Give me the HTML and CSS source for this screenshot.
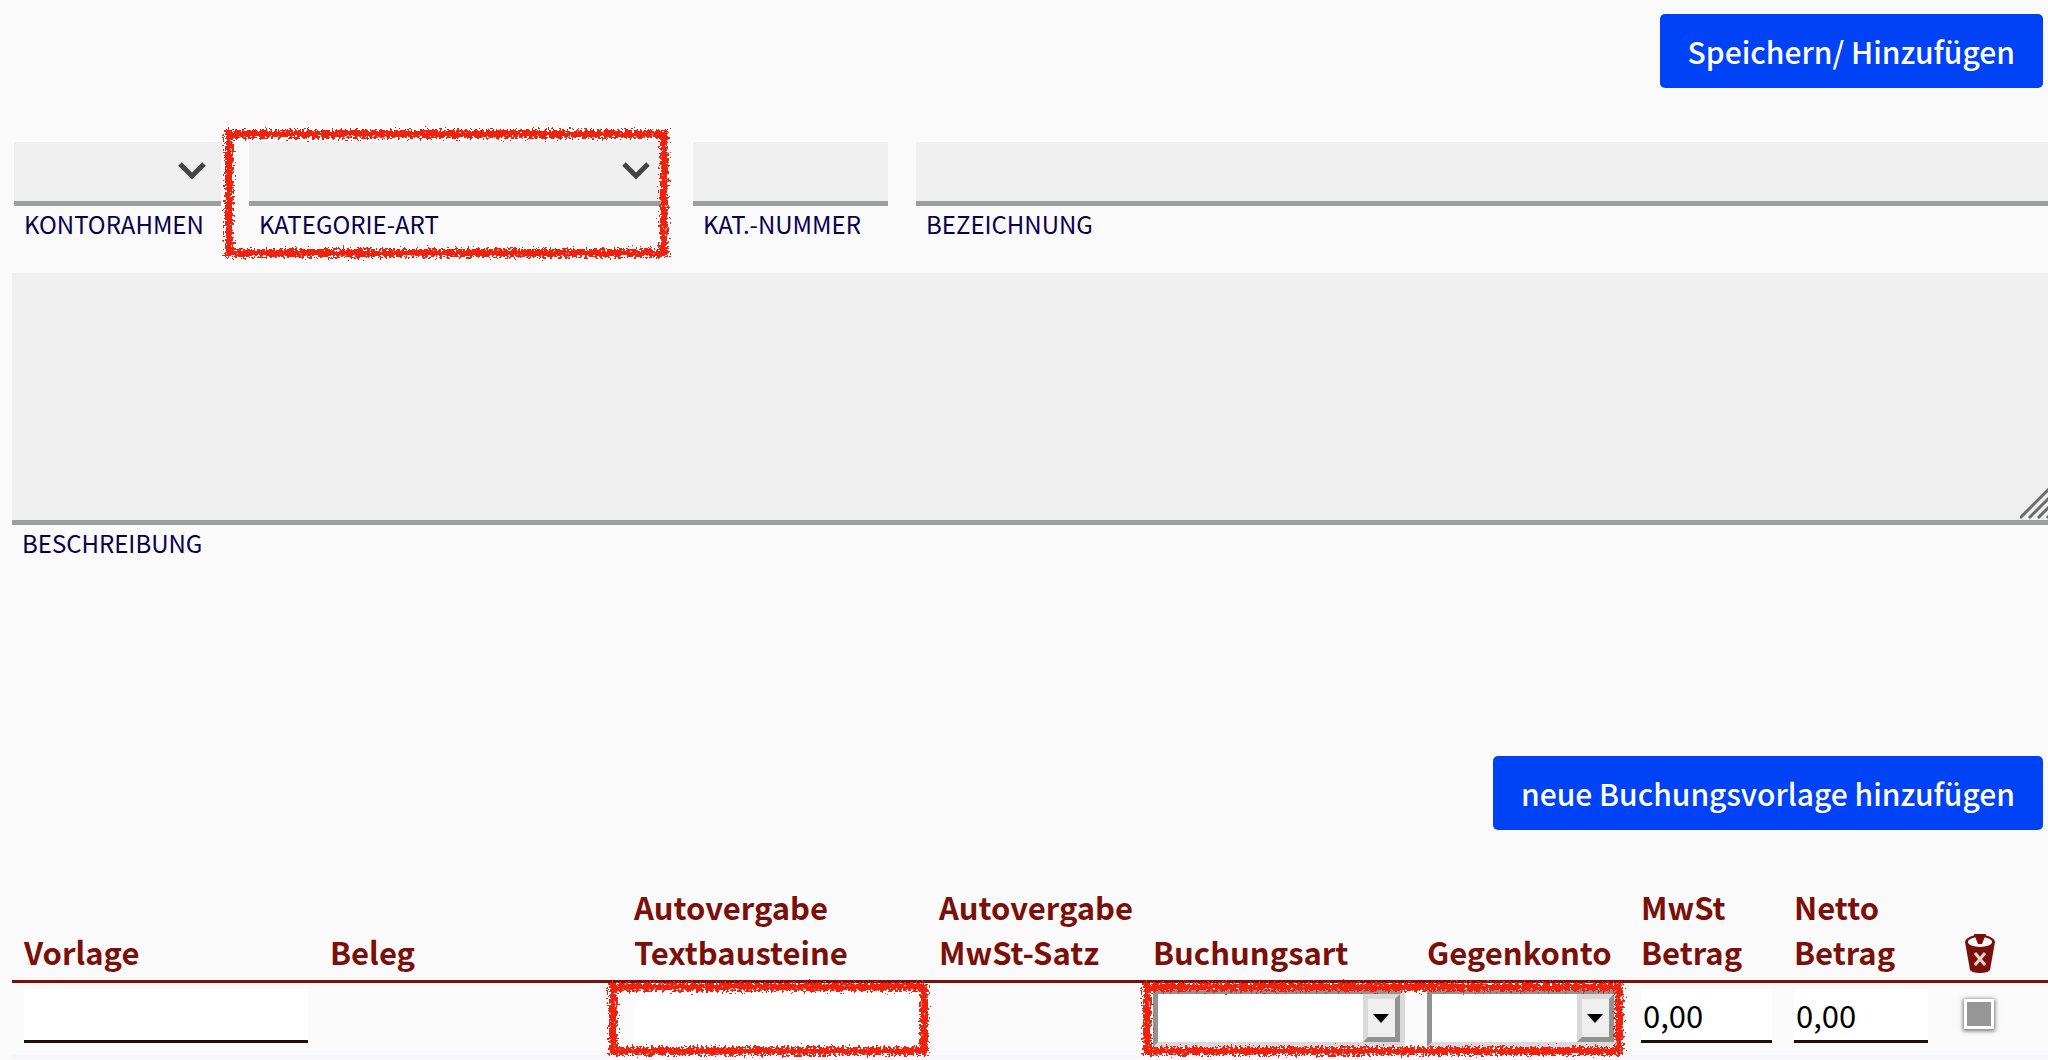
FILE: index.html
```html
<!DOCTYPE html>
<html lang="de">
<head>
  <meta charset="utf-8">
  <title>Kategorie bearbeiten</title>
  <link rel="stylesheet" href="styles.css">
</head>
<body>
  <!-- crayon edge for the markers -->
  <svg class="defs" width="0" height="0" aria-hidden="true">
    <filter id="crayon" x="-5%" y="-10%" width="110%" height="120%">
      <feTurbulence type="fractalNoise" baseFrequency="0.4" numOctaves="3" seed="4" result="noise"/>
      <feDisplacementMap in="SourceGraphic" in2="noise" scale="12" xChannelSelector="R" yChannelSelector="G"/>
    </filter>
  </svg>

  <form>
    <div class="toolbar">
      <button type="button" class="btn">Speichern/ Hinzufügen</button>
    </div>

    <div class="fields">
      <div class="field">
        <select id="kontorahmen"><option></option></select>
        <svg class="chevron" viewBox="0 0 28 18" aria-hidden="true"><path d="M2 2L14 14L26 2"/></svg>
        <label for="kontorahmen">KONTORAHMEN</label>
      </div>
      <div class="field">
        <select id="kategorie"><option></option></select>
        <svg class="chevron" viewBox="0 0 28 18" aria-hidden="true"><path d="M2 2L14 14L26 2"/></svg>
        <label for="kategorie">KATEGORIE-ART</label>
        <span class="marker marker-field"></span>
      </div>
      <div class="field">
        <input type="text" id="nummer">
        <label for="nummer">KAT.-NUMMER</label>
      </div>
      <div class="field">
        <input type="text" id="bezeichnung">
        <label for="bezeichnung">BEZEICHNUNG</label>
      </div>
    </div>

    <div class="description">
      <textarea id="beschreibung"></textarea>
      <svg class="grip" viewBox="0 0 28 32" aria-hidden="true"><path d="M0 30L30 0M9 30L39 0M18 30L48 0M27 30L57 0"/></svg>
      <label for="beschreibung">BESCHREIBUNG</label>
    </div>

    <div class="toolbar second">
      <button type="button" class="btn">neue Buchungsvorlage hinzufügen</button>
    </div>

    <table>
      <colgroup>
        <col class="c-vorlage"><col class="c-beleg"><col class="c-text"><col class="c-satz">
        <col class="c-art"><col class="c-konto"><col class="c-mwst"><col class="c-netto"><col>
      </colgroup>
      <thead>
        <tr>
          <th>Vorlage</th>
          <th>Beleg</th>
          <th>Autovergabe<br>Textbausteine</th>
          <th>Autovergabe<br>MwSt-Satz</th>
          <th>Buchungsart</th>
          <th>Gegenkonto</th>
          <th>MwSt<br>Betrag</th>
          <th>Netto<br>Betrag</th>
          <th class="del">
            <svg class="trash" viewBox="0 0 32 40" role="img" aria-label="Löschen">
              <path class="bin" d="M1 8Q1 4 11 1H21Q31 4 31 8L26 36Q24 39 16 39T6 36Z"/>
              <ellipse class="rim" cx="16" cy="8" rx="12" ry="5"/>
              <path class="bin" d="M10 0H22L18 10H14Z"/>
              <path class="cross" d="M11 19L21 31M21 19L11 31"/>
            </svg>
          </th>
        </tr>
      </thead>
      <tbody>
        <tr>
          <td><input type="text" class="cell" aria-label="Vorlage"></td>
          <td></td>
          <td class="marked">
            <input type="text" class="cell plain" aria-label="Textbausteine">
            <span class="marker marker-text"></span>
          </td>
          <td></td>
          <td class="marked">
            <span class="drop">
              <select aria-label="Buchungsart"><option></option></select>
              <span class="arrow"></span>
            </span>
            <span class="marker marker-drops"></span>
          </td>
          <td>
            <span class="drop">
              <select aria-label="Gegenkonto"><option></option></select>
              <span class="arrow"></span>
            </span>
          </td>
          <td><input type="text" class="cell" value="0,00" aria-label="MwSt Betrag"></td>
          <td><input type="text" class="cell" value="0,00" aria-label="Netto Betrag"></td>
          <td class="del"><input type="checkbox" aria-label="Löschen"></td>
        </tr>
      </tbody>
    </table>
  </form>
</body>
</html>
```
FILE: styles.css
```css
* {
  box-sizing: border-box;
}

body {
  margin: 0;
  background: #fafafa;
  overflow-x: hidden;
  font-family: "Noto Sans CJK JP", "Open Sans", sans-serif;
}

input, select, textarea, button {
  font-family: inherit;
  border-radius: 0;
  outline: none;
}

.defs {
  position: absolute;
}

.toolbar {
  display: flex;
  justify-content: flex-end;
  padding: 14px 5px 0 0;
}

.btn {
  height: 74px;
  padding: 0 28px;
  border: 0;
  border-radius: 5px;
  background: #0042f5;
  color: #fff;
  font-size: 30px;
  font-weight: 500;
  line-height: 44px;
}

.fields {
  display: grid;
  grid-template-columns: 207px 416px 195px 1fr;
  gap: 28px;
  padding: 54px 0 0 14px;
}

.field {
  position: relative;
}

.field select,
.field input {
  display: block;
  width: 100%;
  height: 64px;
  border: 0;
  border-bottom: 5px solid #9b9e9c;
  background: #efefef;
  appearance: none;
}

label {
  display: block;
  padding-left: 10px;
  color: #07004f;
  font-size: 24px;
  line-height: 36px;
}

.chevron {
  position: absolute;
  top: 20px;
  right: 15px;
  width: 28px;
  height: 18px;
  fill: none;
  stroke: #444;
  stroke-width: 5;
}

.marker {
  position: absolute;
  z-index: 1;
  border: 8px solid #f0220c;
  filter: url(#crayon);
  pointer-events: none;
}

.marker-field {
  top: -12px;
  left: -24px;
  right: -3px;
  height: 127px;
}

.description {
  position: relative;
  padding: 31px 0 0 12px;
}

textarea {
  display: block;
  width: 100%;
  height: 252px;
  border: 0;
  border-bottom: 5px solid #9b9e9c;
  background: #efefef;
  resize: none;
}

.grip {
  position: absolute;
  top: 246px;
  right: 0;
  width: 28px;
  height: 32px;
  fill: none;
  stroke: #6a6a6a;
  stroke-width: 3;
}

.second {
  padding-top: 195px;
}

table {
  width: calc(100% - 12px);
  margin: 54px 0 0 12px;
  border-collapse: collapse;
  table-layout: fixed;
}

.c-vorlage { width: 306px; }
.c-beleg { width: 304px; }
.c-text { width: 305px; }
.c-satz { width: 214px; }
.c-art { width: 274px; }
.c-konto { width: 214px; }
.c-mwst { width: 153px; }
.c-netto { width: 156px; }

th {
  padding: 0 0 6px 12px;
  border-bottom: 3px solid #7a1009;
  color: #7a1009;
  font-size: 31px;
  font-weight: 700;
  line-height: 45px;
  text-align: left;
  vertical-align: bottom;
  white-space: nowrap;
}

td {
  height: 75px;
  padding: 6px 0 0 12px;
  border-bottom: 3px solid #f5f5ff;
  vertical-align: top;
}

th.del,
td.del {
  padding-left: 26px;
}

.marked {
  position: relative;
}

.trash {
  display: block;
  width: 32px;
  height: 40px;
}

.bin {
  fill: #7a1009;
}

.rim {
  fill: #fafafa;
}

.cross {
  fill: none;
  stroke: #e8d0ce;
  stroke-width: 3;
}

.cell {
  display: block;
  width: calc(100% - 10px);
  height: 54px;
  padding: 0 2px;
  border: 0;
  border-bottom: 3px solid #1a1010;
  background: #fff;
  color: #000;
  font-size: 31px;
}

.plain {
  border-bottom-color: #fff;
}

.drop {
  display: block;
  position: relative;
  width: calc(100% - 10px);
}

.drop select {
  display: block;
  width: 100%;
  height: 58px;
  border: 5px solid;
  border-color: #929292 #d9d9d9 #d9d9d9 #929292;
  background: #fff;
  appearance: none;
}

.arrow {
  position: absolute;
  top: 5px;
  right: 5px;
  width: 37px;
  height: 48px;
  border: 5px solid;
  border-color: #d9d9d9 #929292 #929292 #d9d9d9;
  background: #efefef;
  pointer-events: none;
}

.arrow::after {
  content: "";
  position: absolute;
  top: 15px;
  left: 5px;
  border: 8px solid transparent;
  border-top: 9px solid #000;
  border-bottom: 0;
}

.marker-text {
  top: 0;
  left: -13px;
  right: -1px;
  height: 72px;
}

.marker-drops {
  top: 0;
  left: 2px;
  width: 480px;
  height: 72px;
}

input[type="checkbox"] {
  display: block;
  width: 30px;
  height: 30px;
  margin: 10px 0 0;
  border: 3px solid #fff;
  background: #969696;
  box-shadow: 0 1px 4px 1px #777;
  appearance: none;
}
```
